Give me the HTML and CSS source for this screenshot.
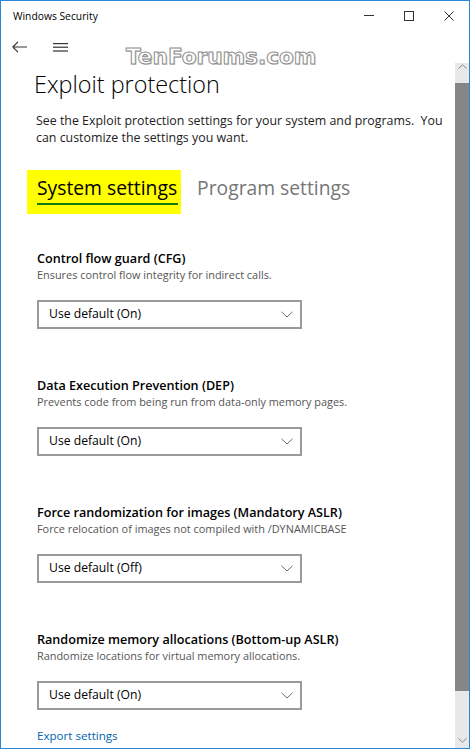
FILE: index.html
```html
<!DOCTYPE html>
<html lang="en">
<head>
<meta charset="utf-8">
<title>Windows Security</title>
<link rel="stylesheet" href="styles.css">
</head>
<body>
<div class="window">
  <header class="titlebar">
    <span class="app-title">Windows Security</span>
    <div class="controls">
      <span class="ctl"><svg width="10" height="10" viewBox="0 0 10 10"><rect x="0" y="4" width="10" height="1" fill="#333"/></svg></span>
      <span class="ctl"><svg width="10" height="10" viewBox="0 0 10 10"><rect x="0.5" y="0.5" width="9" height="9" fill="none" stroke="#333" stroke-width="1"/></svg></span>
      <span class="ctl"><svg width="10" height="10" viewBox="0 0 10 10"><path d="M0.5 0.5 L9.5 9.5 M9.5 0.5 L0.5 9.5" stroke="#333" stroke-width="1" fill="none"/></svg></span>
    </div>
  </header>
  <div class="app">
    <div class="main">
      <nav class="nav">
        <span class="nav-btn back"><svg width="16" height="16" viewBox="0 0 16 16"><path d="M0.8 8 H15 M0.8 8 L6 2.8 M0.8 8 L6 13.2" stroke="#333" stroke-width="1.1" fill="none"/></svg></span>
        <span class="nav-btn menu"><svg width="16" height="16" viewBox="0 0 16 16"><rect x="0" y="4" width="15" height="1.2" fill="#333"/><rect x="0" y="7.6" width="15" height="1.2" fill="#333"/><rect x="0" y="11.4" width="15" height="1.2" fill="#333"/></svg></span>
      </nav>
      <div class="watermark">TenForums.com</div>
      <section class="content">
        <h1 class="page-title">Exploit protection</h1>
        <p class="intro">See the Exploit protection settings for your system and programs.&nbsp; You can customize the settings you want.</p>
        <div class="tabs">
          <div class="tab active"><span class="tab-label">System settings</span></div>
          <div class="tab"><span class="tab-label">Program settings</span></div>
        </div>

        <div class="setting">
          <div class="setting-name">Control flow guard (CFG)</div>
          <div class="setting-desc">Ensures control flow integrity for indirect calls.</div>
          <div class="select"><span>Use default (On)</span><svg width="12" height="7" viewBox="0 0 12 7"><path d="M0.5 0.8 L6 6 L11.5 0.8" stroke="#6e6e6e" stroke-width="1" fill="none"/></svg></div>
        </div>

        <div class="setting">
          <div class="setting-name">Data Execution Prevention (DEP)</div>
          <div class="setting-desc">Prevents code from being run from data-only memory pages.</div>
          <div class="select"><span>Use default (On)</span><svg width="12" height="7" viewBox="0 0 12 7"><path d="M0.5 0.8 L6 6 L11.5 0.8" stroke="#6e6e6e" stroke-width="1" fill="none"/></svg></div>
        </div>

        <div class="setting">
          <div class="setting-name">Force randomization for images (Mandatory ASLR)</div>
          <div class="setting-desc">Force relocation of images not compiled with /DYNAMICBASE</div>
          <div class="select"><span>Use default (Off)</span><svg width="12" height="7" viewBox="0 0 12 7"><path d="M0.5 0.8 L6 6 L11.5 0.8" stroke="#6e6e6e" stroke-width="1" fill="none"/></svg></div>
        </div>

        <div class="setting">
          <div class="setting-name">Randomize memory allocations (Bottom-up ASLR)</div>
          <div class="setting-desc">Randomize locations for virtual memory allocations.</div>
          <div class="select"><span>Use default (On)</span><svg width="12" height="7" viewBox="0 0 12 7"><path d="M0.5 0.8 L6 6 L11.5 0.8" stroke="#6e6e6e" stroke-width="1" fill="none"/></svg></div>
        </div>

        <a class="export" href="#">Export settings</a>
      </section>
    </div>
    <div class="scrollbar">
      <div class="sb-btn up"><svg width="9" height="5" viewBox="0 0 9 5"><path d="M0.5 4.5 L4.5 0.8 L8.5 4.5" stroke="#8a8a8a" stroke-width="1" fill="none"/></svg></div>
      <div class="sb-thumb"></div>
      <div class="sb-track"></div>
      <div class="sb-btn down"><svg width="9" height="5" viewBox="0 0 9 5"><path d="M0.5 0.5 L4.5 4.2 L8.5 0.5" stroke="#8a8a8a" stroke-width="1" fill="none"/></svg></div>
    </div>
  </div>
</div>
</body>
</html>
```

FILE: styles.css
```css
html, body {
  margin: 0;
  padding: 0;
  background: #fff;
}

body {
  font-family: "Open Sans", "Noto Sans", sans-serif;
  color: #000;
}

.window {
  width: 470px;
  height: 749px;
  box-sizing: border-box;
  border: 1px solid #2b88d8;
  display: flex;
  flex-direction: column;
  overflow: hidden;
  background: #fff;
}

.titlebar {
  height: 30px;
  flex: 0 0 30px;
  display: flex;
  align-items: center;
  justify-content: space-between;
}

.app-title {
  padding-left: 12px;
  font-size: 10.3px;
  color: #000;
}

.controls {
  display: flex;
  height: 100%;
}

.ctl {
  width: 40px;
  height: 100%;
  display: flex;
  align-items: center;
  justify-content: center;
}

.ctl svg {
  display: block;
}

.app {
  flex: 1;
  display: flex;
  min-height: 0;
}

.main {
  flex: 1;
  position: relative;
  overflow: hidden;
}

.nav {
  height: 37px;
  display: flex;
  align-items: flex-start;
  padding-left: 11px;
  padding-top: 8px;
  box-sizing: border-box;
}

.nav-btn {
  display: block;
}

.nav-btn svg {
  display: block;
}

.nav-btn.back {
  width: 41px;
}

.watermark {
  position: absolute;
  left: 125px;
  top: 13px;
  font-family: "DejaVu Sans", sans-serif;
  font-weight: bold;
  font-size: 21.6px;
  color: #fff;
  -webkit-text-stroke: 1px #8c8c8c;
  text-shadow: 1px 1px 0 #d6d6d6;
  white-space: nowrap;
}

.content {
  padding-left: 35px;
  padding-right: 8px;
}

.page-title {
  margin: 0 0 0 -2px;
  font-size: 23.4px;
  font-weight: 300;
  line-height: 32px;
  color: #000;
}

.intro {
  margin: 12px 0 0 0;
  font-size: 12.4px;
  line-height: 17px;
  color: #222;
}

.tabs {
  display: flex;
  align-items: flex-start;
  gap: 6px;
  margin: 24px 0 0 -9px;
}

.tab {
  padding: 5px 3px 9px 10px;
}

.tab.active {
  background: #ffff00;
}

.tab-label {
  display: block;
  font-size: 19.3px;
  line-height: 26px;
  color: #767676;
  padding: 0 1px 2px 0;
  border-bottom: 2px solid transparent;
}

.tab.active .tab-label {
  color: #000;
  border-bottom-color: #107c10;
}

.setting {
  margin: 0 0 0 1px;
  padding-top: 36px;
}

.setting + .setting {
  padding-top: 48px;
}

.setting-name {
  font-size: 12.6px;
  font-weight: 600;
  line-height: 17px;
}

.setting-desc {
  font-size: 10.9px;
  line-height: 16px;
  color: #555;
}

.select {
  margin-top: 17px;
  width: 265px;
  height: 29px;
  box-sizing: border-box;
  border: 2px solid #9a9a9a;
  display: flex;
  align-items: center;
  justify-content: space-between;
  padding: 0 7px 2px 10px;
  font-size: 12.2px;
}

.select svg {
  display: block;
  margin-top: 2px;
}

.export {
  display: inline-block;
  margin: 17px 0 0 1px;
  font-size: 11.6px;
  line-height: 18px;
  color: #0063b1;
  text-decoration: none;
}

.scrollbar {
  width: 14px;
  flex: 0 0 14px;
  margin-top: 32px;
  display: flex;
  flex-direction: column;
  background: #e8e8e8;
}

.sb-btn {
  display: flex;
  justify-content: center;
}

.sb-btn.up {
  height: 20px;
  align-items: flex-start;
  padding-top: 1px;
  box-sizing: border-box;
}

.sb-btn.down {
  height: 16px;
  align-items: center;
}

.sb-thumb {
  height: 608px;
  background: #868686;
}

.sb-track {
  flex: 1;
}
```
